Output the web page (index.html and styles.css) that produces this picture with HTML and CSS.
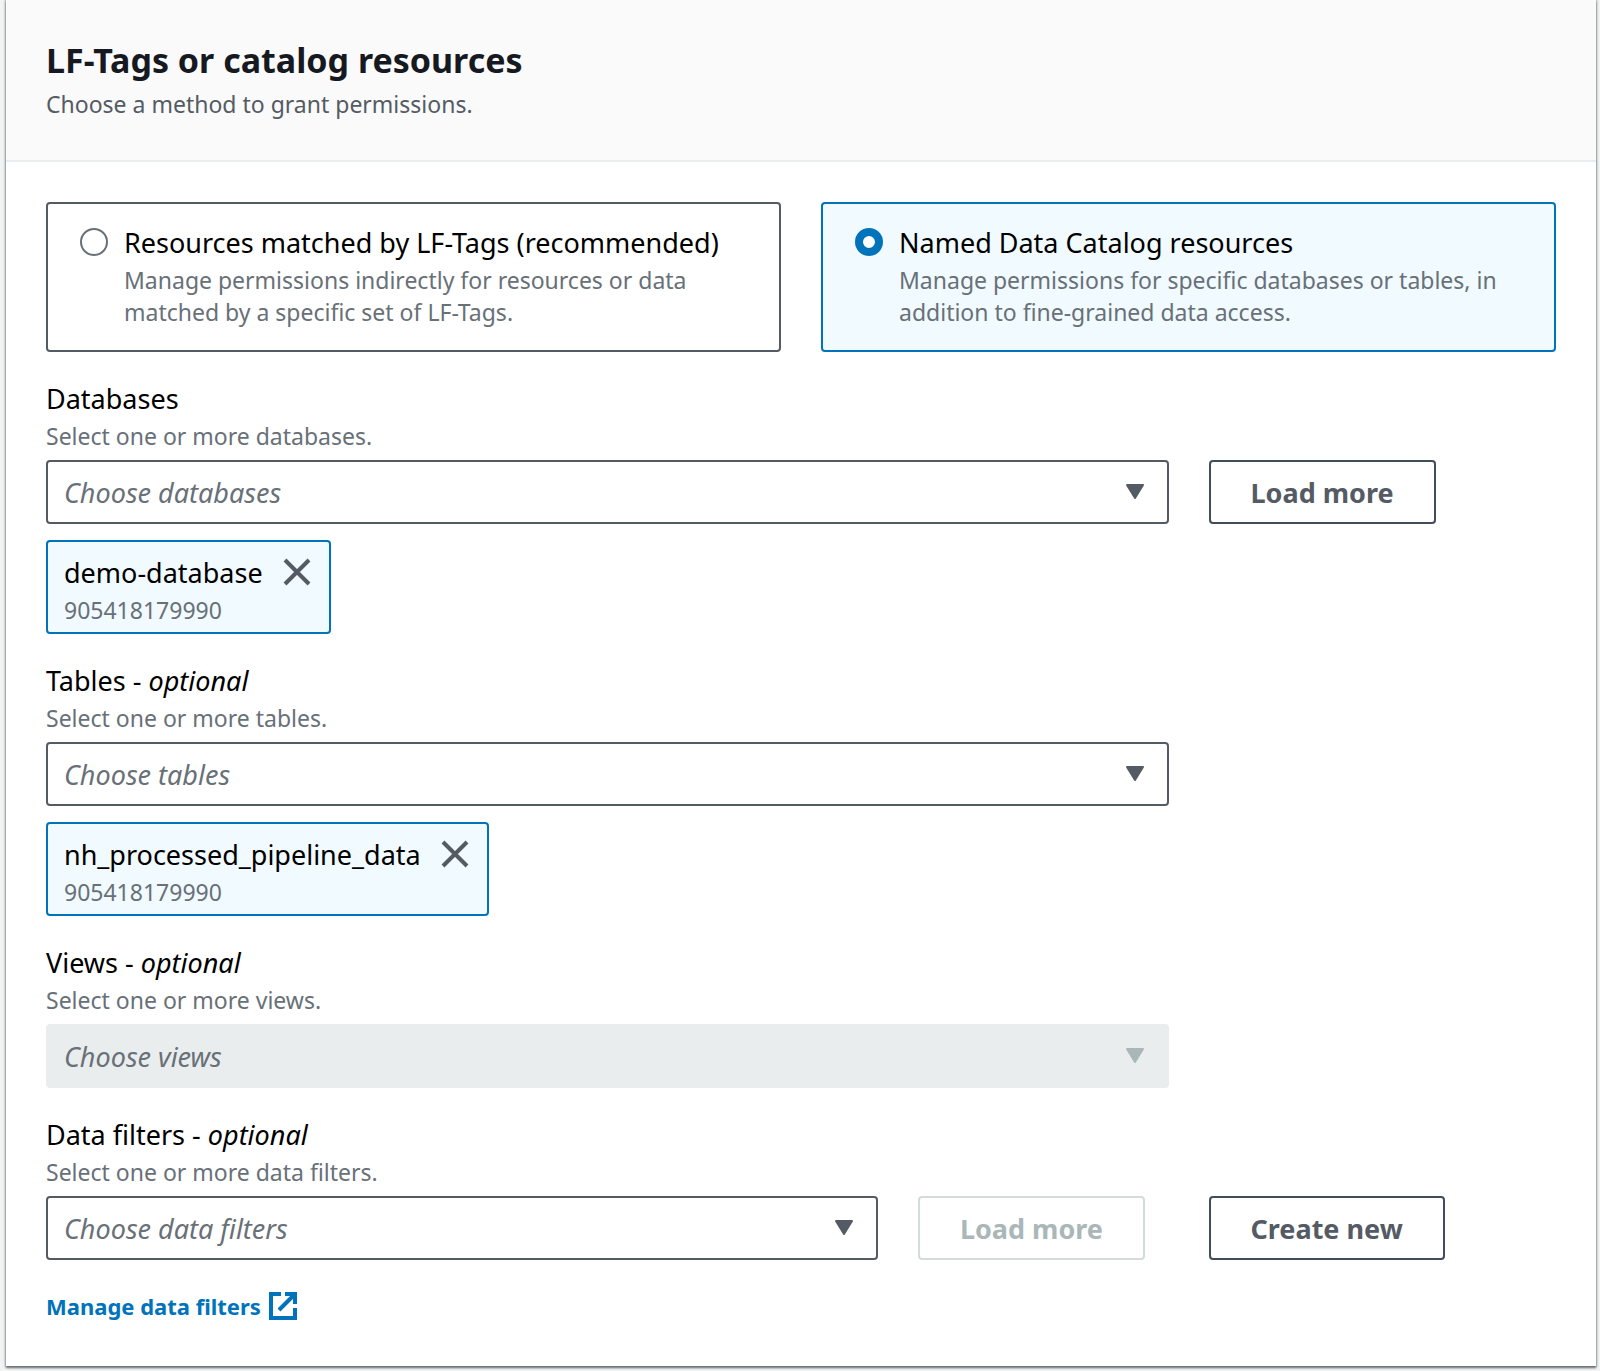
FILE: index.html
```html
<!DOCTYPE html>
<html lang="en">
<head>
    <meta charset="UTF-8">
    <meta name="viewport" content="width=device-width, initial-scale=1.0">
    <title>LF-Tags or catalog resources</title>
    <link rel="stylesheet" href="styles.css">
</head>
<body>
    <form class="panel">
        <div class="header">
            <h2>LF-Tags or catalog resources</h2>
            <p>Choose a method to grant permissions.</p>
        </div>
        <div class="content">
            <div class="tiles">
                <label class="tile">
                    <input type="radio" name="method">
                    <span class="tile-text">
                        <span class="title">Resources matched by LF-Tags (recommended)</span>
                        <span class="desc">Manage permissions indirectly for resources or data matched by a specific set of LF-Tags.</span>
                    </span>
                </label>
                <label class="tile">
                    <input type="radio" name="method" checked>
                    <span class="tile-text">
                        <span class="title">Named Data Catalog resources</span>
                        <span class="desc">Manage permissions for specific databases or tables, in addition to fine-grained data access.</span>
                    </span>
                </label>
            </div>

            <div class="field">
                <label class="title" for="databases">Databases</label>
                <p class="desc">Select one or more databases.</p>
                <div class="row">
                    <div class="select wide">
                        <select id="databases"><option>Choose databases</option></select>
                        <svg class="arrow" viewBox="0 0 20 16"><path d="M2 1h16L10 14z"/></svg>
                    </div>
                    <button type="button" class="btn">Load more</button>
                </div>
                <div class="token">
                    <div>
                        <div class="title">demo-database</div>
                        <div class="desc">905418179990</div>
                    </div>
                    <button type="button" class="close" aria-label="Remove demo-database">
                        <svg viewBox="0 0 28 28"><path d="M2 2l24 24M26 2L2 26"/></svg>
                    </button>
                </div>
            </div>

            <div class="field">
                <label class="title" for="tables">Tables - <i>optional</i></label>
                <p class="desc">Select one or more tables.</p>
                <div class="row">
                    <div class="select wide">
                        <select id="tables"><option>Choose tables</option></select>
                        <svg class="arrow" viewBox="0 0 20 16"><path d="M2 1h16L10 14z"/></svg>
                    </div>
                </div>
                <div class="token">
                    <div>
                        <div class="title">nh_processed_pipeline_data</div>
                        <div class="desc">905418179990</div>
                    </div>
                    <button type="button" class="close" aria-label="Remove nh_processed_pipeline_data">
                        <svg viewBox="0 0 28 28"><path d="M2 2l24 24M26 2L2 26"/></svg>
                    </button>
                </div>
            </div>

            <div class="field">
                <label class="title" for="views">Views - <i>optional</i></label>
                <p class="desc">Select one or more views.</p>
                <div class="row">
                    <div class="select wide">
                        <select id="views" disabled><option>Choose views</option></select>
                        <svg class="arrow" viewBox="0 0 20 16"><path d="M2 1h16L10 14z"/></svg>
                    </div>
                </div>
            </div>

            <div class="field">
                <label class="title" for="filters">Data filters - <i>optional</i></label>
                <p class="desc">Select one or more data filters.</p>
                <div class="row">
                    <div class="row wide">
                        <div class="select wide">
                            <select id="filters"><option>Choose data filters</option></select>
                            <svg class="arrow" viewBox="0 0 20 16"><path d="M2 1h16L10 14z"/></svg>
                        </div>
                        <button type="button" class="btn" disabled>Load more</button>
                    </div>
                    <button type="button" class="btn">Create new</button>
                </div>
            </div>

            <a class="link" href="#">Manage data filters
                <svg viewBox="0 0 28 28"><path d="M12 2H2v24h24V16M16 2h10v10M26 2L10 18"/></svg>
            </a>
        </div>
    </form>
</body>
</html>
```
FILE: styles.css
```css
*{
    padding: 0;
    margin: 0;
    box-sizing: border-box;
}
body{
    background-color: #f2f3f3;
    font-family: "Noto Sans", "Open Sans", sans-serif;
    font-size: 27px;
    line-height: 42px;
    color: #000;
}
.panel{
    margin: 0 4px 4px 6px;
    background-color: #fff;
    box-shadow: 0 2px 2px #687078, 0 0 2px 1px #aab7b8;
}
.header{
    padding: 38px 40px 40px;
    background-color: #fafafa;
    border-bottom: 2px solid #eaeded;
}
.header h2{
    font-size: 34px;
    line-height: 44px;
    color: #16191f;
}
.header p{
    margin-top: 6px;
    font-size: 23px;
    line-height: 32px;
    color: #545b64;
}
.content{
    display: flex;
    flex-direction: column;
    gap: 26px;
    padding: 40px 40px 44px;
}
.tiles{
    display: grid;
    grid-template-columns: 1fr 1fr;
    gap: 40px;
}
.tile{
    display: flex;
    gap: 16px;
    padding: 18px 32px 22px;
    border: 2px solid #545b64;
    border-radius: 4px;
}
.tile:has(input:checked){
    background-color: #f1faff;
    border-color: #0073bb;
}
.tile input{
    appearance: none;
    flex: none;
    width: 28px;
    height: 28px;
    margin-top: 6px;
    border: 2px solid #687078;
    border-radius: 50%;
    background-color: #fff;
}
.tile input:checked{
    border: 8px solid #0073bb;
}
.title{
    display: block;
}
.desc{
    display: block;
    font-size: 23px;
    line-height: 32px;
    color: #687078;
}
.row{
    display: grid;
    grid-template-columns: repeat(12, 1fr);
    column-gap: 40px;
}
.field > .row{
    margin-top: 8px;
}
.wide{
    grid-column: span 9;
}
.select{
    position: relative;
}
select{
    appearance: none;
    display: block;
    width: 100%;
    height: 64px;
    padding: 0 64px 0 16px;
    border: 2px solid #545b64;
    border-radius: 4px;
    background-color: #fff;
    font: italic 27px "Noto Sans", "Open Sans", sans-serif;
    color: #687078;
}
select:disabled{
    background-color: #eaeded;
    border-color: #eaeded;
    opacity: 1;
}
.arrow{
    position: absolute;
    right: 24px;
    top: 24px;
    width: 20px;
    height: 16px;
    fill: #545b64;
    stroke: #545b64;
    stroke-width: 2;
    stroke-linejoin: round;
    pointer-events: none;
}
select:disabled + .arrow{
    fill: #aab7b8;
    stroke: #aab7b8;
}
.btn{
    grid-column: span 3;
    justify-self: start;
    height: 64px;
    padding: 0 40px;
    border: 2px solid #414d5c;
    border-radius: 4px;
    background-color: #fff;
    font: bold 27px "Noto Sans", "Open Sans", sans-serif;
    white-space: nowrap;
    color: #545b64;
}
.btn:disabled{
    border-color: #d5dbdb;
    color: #aab7b8;
}
.token{
    display: flex;
    align-items: flex-start;
    gap: 20px;
    width: fit-content;
    margin-top: 16px;
    padding: 10px 18px 6px 16px;
    border: 2px solid #0073bb;
    border-radius: 4px;
    background-color: #f1faff;
}
.close{
    width: 28px;
    height: 28px;
    margin-top: 6px;
    border: none;
    background: none;
}
.close svg{
    display: block;
    fill: none;
    stroke: #545b64;
    stroke-width: 4;
}
.link{
    display: flex;
    align-items: center;
    align-self: flex-start;
    gap: 8px;
    margin-top: 4px;
    font-size: 22px;
    font-weight: bold;
    line-height: 32px;
    color: #0073bb;
    text-decoration: none;
}
.link svg{
    width: 28px;
    height: 28px;
    fill: none;
    stroke: #0073bb;
    stroke-width: 4;
}
```
